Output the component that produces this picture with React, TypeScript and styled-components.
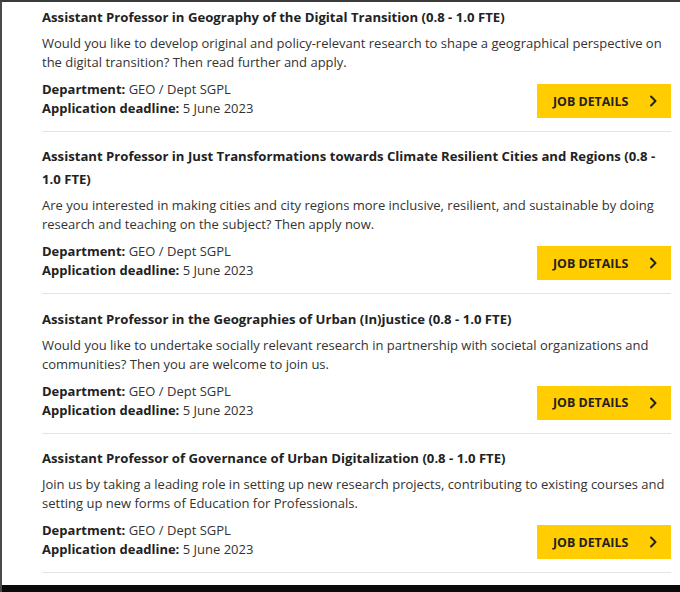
import React from "react"
import styled, { createGlobalStyle } from "styled-components"

const GlobalStyle = createGlobalStyle`
  html, body {
    margin: 0;
    padding: 0;
    background: #fff;
  }
  body {
    font-family: "Open Sans", "Noto Sans", Arial, sans-serif;
    -webkit-font-smoothing: antialiased;
  }
`

const Frame = styled.div`
  box-sizing: border-box;
  width: 680px;
  height: 592px;
  display: flex;
  flex-direction: column;
  border-top: 2px solid #3a3a3a;
  border-left: 2px solid #4a4a4a;
  overflow: hidden;
`

const List = styled.ul`
  flex: 1;
  list-style: none;
  margin: 0;
  padding: 4px 9px 0 40px;
`

const Vacancy = styled.li`
  padding: 0 0 13px;
  margin-bottom: 13.4px;
  border-bottom: 1px solid #e4e4e4;

  &:last-child {
    margin-bottom: 0;
  }
`

const Title = styled.h3`
  margin: 0 0 5px;
  font-size: 13.15px;
  font-weight: 700;
  line-height: 23px;
  color: #222;
`

const Summary = styled.p`
  margin: 0 0 8px;
  font-size: 13px;
  line-height: 19px;
  color: #333;
`

const Footer = styled.div`
  display: flex;
  justify-content: space-between;
  align-items: flex-end;
`

const Meta = styled.div`
  font-size: 13px;
  line-height: 19px;
  color: #333;

  b {
    font-weight: 700;
    color: #222;
  }
`

const DetailsButton = styled.a`
  box-sizing: border-box;
  width: 134px;
  height: 34px;
  display: flex;
  align-items: center;
  justify-content: space-between;
  padding: 0 14px 0 16px;
  background: #ffcd00;
  color: #222;
  font-size: 12.4px;
  font-weight: 700;
  text-transform: uppercase;
  text-decoration: none;
`

const BottomBar = styled.div`
  height: 7px;
  background: #0a0a0a;
`

const Chevron = () => (
  <svg width="8" height="12" viewBox="0 0 8 12" fill="none">
    <path
      d="M2 1.5 L6.5 6 L2 10.5"
      stroke="#222"
      strokeWidth="2"
      strokeLinecap="round"
      strokeLinejoin="round"
    />
  </svg>
)

const vacancies = [
  {
    title:
      "Assistant Professor in Geography of the Digital Transition (0.8 - 1.0 FTE)",
    summary:
      "Would you like to develop original and policy-relevant research to shape a geographical perspective on the digital transition? Then read further and apply.",
  },
  {
    title:
      "Assistant Professor in Just Transformations towards Climate Resilient Cities and Regions (0.8 - 1.0 FTE)",
    summary:
      "Are you interested in making cities and city regions more inclusive, resilient, and sustainable by doing research and teaching on the subject? Then apply now.",
  },
  {
    title:
      "Assistant Professor in the Geographies of Urban (In)justice (0.8 - 1.0 FTE)",
    summary:
      "Would you like to undertake socially relevant research in partnership with societal organizations and communities? Then you are welcome to join us.",
  },
  {
    title:
      "Assistant Professor of Governance of Urban Digitalization (0.8 - 1.0 FTE)",
    summary:
      "Join us by taking a leading role in setting up new research projects, contributing to existing courses and setting up new forms of Education for Professionals.",
  },
]

export default function App() {
  return (
    <>
      <GlobalStyle />
      <Frame>
        <List>
          {vacancies.map((v) => (
            <Vacancy key={v.title}>
              <Title>{v.title}</Title>
              <Summary>{v.summary}</Summary>
              <Footer>
                <Meta>
                  <div>
                    <b>Department:</b> GEO / Dept SGPL
                  </div>
                  <div>
                    <b>Application deadline:</b> 5 June 2023
                  </div>
                </Meta>
                <DetailsButton href="#">
                  Job details
                  <Chevron />
                </DetailsButton>
              </Footer>
            </Vacancy>
          ))}
        </List>
        <BottomBar />
      </Frame>
    </>
  )
}
